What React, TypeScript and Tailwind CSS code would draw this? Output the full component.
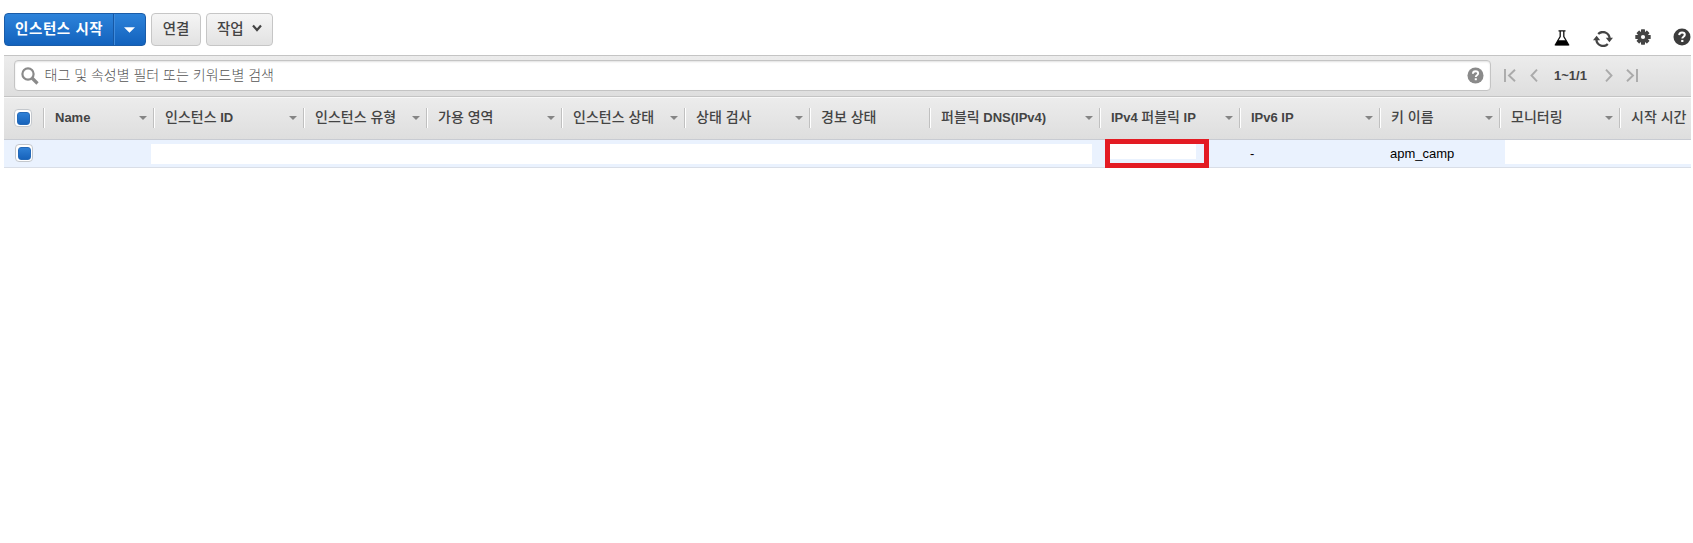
import React from 'react';

type Column = { label: string; width: string; arrow: boolean };

const columns: Column[] = [
  { label: 'Name', width: 'w-[110px]', arrow: true },
  { label: '인스턴스 ID', width: 'w-[150px]', arrow: true },
  { label: '인스턴스 유형', width: 'w-[123px]', arrow: true },
  { label: '가용 영역', width: 'w-[135px]', arrow: true },
  { label: '인스턴스 상태', width: 'w-[123px]', arrow: true },
  { label: '상태 검사', width: 'w-[125px]', arrow: true },
  { label: '경보 상태', width: 'w-[120px]', arrow: false },
  { label: '퍼블릭 DNS(IPv4)', width: 'w-[170px]', arrow: true },
  { label: 'IPv4 퍼블릭 IP', width: 'w-[140px]', arrow: true },
  { label: 'IPv6 IP', width: 'w-[140px]', arrow: true },
  { label: '키 이름', width: 'w-[120px]', arrow: true },
  { label: '모니터링', width: 'w-[120px]', arrow: true },
  { label: '시작 시간', width: 'w-[71px]', arrow: false },
];

/* Latin runs are bold 13px, Hangul runs are medium 14px. */
function Label({ text }: { text: string }) {
  const runs = text.split(/([가-힣]+(?: [가-힣]+)*)/).filter(Boolean);
  return (
    <span className="whitespace-pre leading-5">
      {runs.map((run, i) =>
        /[가-힣]/.test(run) ? (
          <span key={i} className="text-[14px] font-medium">{run}</span>
        ) : (
          <span key={i} className="text-[13px] font-bold">{run}</span>
        ),
      )}
    </span>
  );
}

function CheckBox() {
  return (
    <span className="flex size-[18px] items-center justify-center rounded-[4px] border border-[#c3c7cc] bg-white">
      <span className="size-[13px] rounded-[3px] border border-[#2469b8] bg-linear-to-b from-[#2f80d6] to-[#1763bb]" />
    </span>
  );
}

function HelpIcon({ className }: { className: string }) {
  return (
    <svg viewBox="0 0 18 18" className={className}>
      <circle cx="9" cy="9" r="8.5" fill="currentColor" />
      <path d="M6.2 7.1C6.3 5.3 7.4 4.5 9 4.5c1.700 0 2.800.9 2.800 2.300 0 2-2.500 1.900-2.500 3.800" fill="none" stroke="#fff" strokeWidth="2" />
      <rect x="8.200" y="11.900" width="2.200" height="2.100" fill="#fff" />
    </svg>
  );
}

export default function App() {
  return (
    <div className="h-[543px] w-[1693px] overflow-hidden bg-white pl-1 pr-0.5 font-['Liberation_Sans','Noto_Sans_CJK_KR',sans-serif] text-[#444]">
      <div className="flex h-[55px] justify-between pt-[13px]">
        <div className="flex gap-[5px]">
          <button className="flex h-[33px] w-[142px] overflow-hidden rounded-[4px] border border-[#1a5ca8] bg-linear-to-b from-[#2d83da] to-[#1262bd] text-white">
            <span className="h-full w-[109px] whitespace-nowrap border-r border-[#1658a5] pl-[10px] text-left text-[14.500px] font-bold leading-[31px] tracking-[0.6px]">인스턴스 시작</span>
            <span className="flex h-full flex-1 items-center justify-center border-l border-[#3f8bdc]">
              <svg viewBox="0 0 12 6" className="mr-px mt-px h-[6px] w-[11px]"><path d="M0 0h12L6 6z" fill="#fff" /></svg>
            </span>
          </button>
          <button className="h-[33px] w-[50px] rounded-[4px] border border-[#c6c6c6] bg-linear-to-b from-[#f5f5f5] to-[#e2e2e2] text-[14.500px] font-medium leading-[29px]">연결</button>
          <button className="flex h-[33px] w-[67px] items-center rounded-[4px] border border-[#c6c6c6] bg-linear-to-b from-[#f5f5f5] to-[#e2e2e2] pl-[10px]">
            <span className="h-full text-[14.500px] font-medium leading-[30px]">작업</span>
            <svg viewBox="0 0 10 8" className="ml-[8px] mb-[3px] h-[8px] w-[10px]"><path d="M1 1.500l4 4.500 4-4.500" fill="none" stroke="#444" strokeWidth="2.200" /></svg>
          </button>
        </div>
        <div className="mt-[15px] flex h-[18px] items-center">
          <svg viewBox="0 0 16 16" className="mr-[23px] mt-px size-[16px]">
            <path d="M4.500.9h7M6.200 1v5.500L1.500 14.500h13L9.800 6.500V1" fill="none" stroke="#111" strokeWidth="1.300" />
            <path d="M4 10.200h8l3 5.300H1z" fill="#000" />
          </svg>
          <svg viewBox="0 0 20 16" className="mr-[22px] mt-[3px] h-[16px] w-[20px]">
            <path d="M5.200 3A6.700 6.700 0 0 1 16.600 7.500M14.800 13A6.700 6.700 0 0 1 3.400 8.500" fill="none" stroke="#444" strokeWidth="2.300" />
            <path d="M12.800 6.800h7.200l-3.600 4.400zM0 9.200h7.200L3.600 4.800z" fill="#444" />
          </svg>
          <svg viewBox="0 0 16 16" className="mr-[22px] mb-px size-[16px] text-[#444]">
            <g fill="currentColor">
              <rect x="6" y="0.300" width="4" height="15.400" rx=".6" />
              <rect x="6" y="0.600" width="4" height="14.800" rx=".6" transform="rotate(45 8 8)" />
              <rect x="6" y="0.300" width="4" height="15.400" rx=".6" transform="rotate(90 8 8)" />
              <rect x="6" y="0.600" width="4" height="14.800" rx=".6" transform="rotate(135 8 8)" />
              <circle cx="8" cy="8" r="5.600" />
            </g>
            <circle cx="8" cy="8" r="2.100" fill="#fff" />
          </svg>
          <HelpIcon className="size-[18px] text-[#3c3c3c]" />
        </div>
      </div>

      <div className="flex h-[42px] border-y border-[#c4c4c4] bg-linear-to-b from-[#ececec] to-[#dedede] pl-[10px] pt-[4px]">
        <div className="flex h-[31px] w-[1477px] items-center rounded-[4px] border border-[#c4c4c4] bg-white pl-[6px] pr-[6px] shadow-[inset_0_1px_2px_rgba(0,0,0,0.12)]">
          <svg viewBox="0 0 18 18" className="mt-[1px] size-[18px]">
            <circle cx="7" cy="7" r="5.600" fill="none" stroke="#8a8a8a" strokeWidth="2.200" />
            <path d="M11 11l5.500 5.500" stroke="#8a8a8a" strokeWidth="3.200" />
          </svg>
          <span className="ml-[5.500px] mb-[2px] flex-1 whitespace-nowrap text-[14px] font-light leading-5 text-[#555]">태그 및 속성별 필터 또는 키워드별 검색</span>
          <HelpIcon className="size-[17px] text-[#8a8a8a]" />
        </div>
        <div className="flex h-[31px] items-center pl-[13px] text-[#aaa]">
          <svg viewBox="0 0 12 13" className="h-[13px] w-[12px]"><path d="M1 0v13M11 .7L5 6.500l6 5.800" fill="none" stroke="currentColor" strokeWidth="1.900" /></svg>
          <svg viewBox="0 0 8 13" className="ml-[14px] h-[13px] w-[8px]"><path d="M7 .7L1.500 6.500 7 12.300" fill="none" stroke="currentColor" strokeWidth="1.900" /></svg>
          <span className="ml-[16px] mt-px w-[34px] whitespace-nowrap text-[13px] font-bold text-[#444]">1~1/1</span>
          <svg viewBox="0 0 8 13" className="ml-[17px] h-[13px] w-[8px]"><path d="M1 .7l5.500 5.800L1 12.300" fill="none" stroke="currentColor" strokeWidth="1.900" /></svg>
          <svg viewBox="0 0 12 13" className="ml-[13px] h-[13px] w-[12px]"><path d="M11 0v13M1 .7l6 5.800-6 5.800" fill="none" stroke="currentColor" strokeWidth="1.900" /></svg>
        </div>
      </div>

      <div className="flex h-[43px] border-b border-t border-b-[#c8cbd2] border-t-[#f8f8f8] bg-linear-to-b from-[#ececec] to-[#dedede]">
        <div className="w-[39px] pl-[10px] pt-[11px]"><CheckBox /></div>
        {columns.map((column) => (
          <div key={column.label} className={`${column.width} flex shrink-0 pt-[10px]`}>
            <div className="flex h-[20px] flex-1 items-center border-l border-[#c0c0c0] shadow-[inset_1px_0_0_#fff]">
              <span className="-mt-[3px] flex-1 whitespace-nowrap pl-[11px]"><Label text={column.label} /></span>
              {column.arrow && (
                <svg viewBox="0 0 8 4" className="mr-[6px] h-[4px] w-[8px]"><path d="M0 0h8L4 4z" fill="#858585" /></svg>
              )}
            </div>
          </div>
        ))}
      </div>

      <div className="flex h-[28px] border-b border-[#d9dee7] bg-[#eaf2fe] text-[13px] leading-[27px] text-black">
        <div className="w-[147px] pl-[11px] pt-[4px]"><CheckBox /></div>
        <div className="mt-[4px] h-5 w-[941px] bg-white" />
        <div className="ml-[13px] -mt-px h-[29px] w-[104px] border-[5px] border-[#e31b23]">
          <div className="h-[15px] w-[86px] bg-white" />
        </div>
        <div className="w-[138px] pl-[41px]">-</div>
        <div className="w-[158px] pl-[43px]">apm_camp</div>
        <div className="h-[24px] flex-1 bg-white" />
      </div>
    </div>
  );
}
